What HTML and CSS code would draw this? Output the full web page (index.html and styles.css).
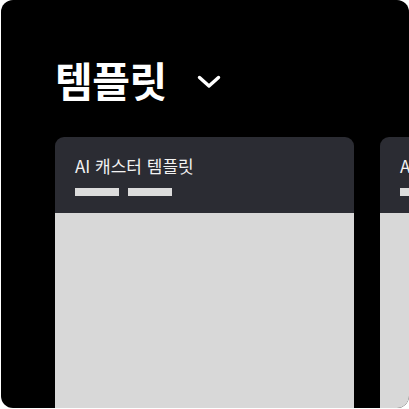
FILE: index.html
```html
<!DOCTYPE html>
<html lang="ko">
<head>
<meta charset="utf-8">
<link rel="stylesheet" href="styles.css">
</head>
<body>
<div class="panel">
  <div class="heading">
    <h1 class="title">템플릿</h1>
    <svg class="chevron" width="24" height="14" viewBox="0 0 24 14"><path d="M2.5 2.5 L12 11 L21.5 2.5" fill="none" stroke="#fff" stroke-width="3.4" stroke-linecap="round" stroke-linejoin="round"/></svg>
  </div>
  <div class="cards">
    <div class="card">
      <div class="card-head">
        <div class="card-title">AI 캐스터 템플릿</div>
        <div class="bars"><span class="bar"></span><span class="bar"></span></div>
      </div>
      <div class="card-body"></div>
    </div>
    <div class="card">
      <div class="card-head">
        <div class="card-title">AI 캐스터 템플릿</div>
        <div class="bars"><span class="bar"></span><span class="bar"></span></div>
      </div>
      <div class="card-body"></div>
    </div>
  </div>
</div>
</body>
</html>
```
FILE: styles.css
```css
html, body {
  margin: 0;
  padding: 0;
  background: #ffffff;
}
body {
  width: 409px;
  height: 409px;
  overflow: hidden;
  font-family: "Noto Sans CJK KR", "Noto Sans", sans-serif;
}
.panel {
  margin-left: 1px;
  width: 408px;
  height: 408px;
  background: #000;
  border-radius: 12px;
  overflow: hidden;
  padding-left: 54px;
  box-sizing: border-box;
}
.heading {
  display: flex;
  align-items: flex-start;
  gap: 30px;
  height: 137px;
}
.title {
  margin: 51px 0 0;
  font-size: 41px;
  font-weight: 700;
  color: #fff;
  line-height: 56px;
  letter-spacing: -0.5px;
}
.chevron {
  display: block;
  margin-top: 75px;
}
.cards {
  display: flex;
  gap: 26px;
}
.card {
  flex: 0 0 299px;
  border-radius: 9px;
  overflow: hidden;
}
.card-head {
  background: #2b2c33;
  height: 76px;
  padding: 16px 20px 0;
  box-sizing: border-box;
}
.card-title {
  color: #f2f2f2;
  font-size: 17px;
  line-height: 26px;
  letter-spacing: 0;
  white-space: nowrap;
}
.bars {
  display: flex;
  gap: 9px;
  margin-top: 9px;
}
.bar {
  width: 44px;
  height: 8px;
  background: #dcdcdc;
}
.card-body {
  background: #d8d8d8;
  height: 260px;
}
```
